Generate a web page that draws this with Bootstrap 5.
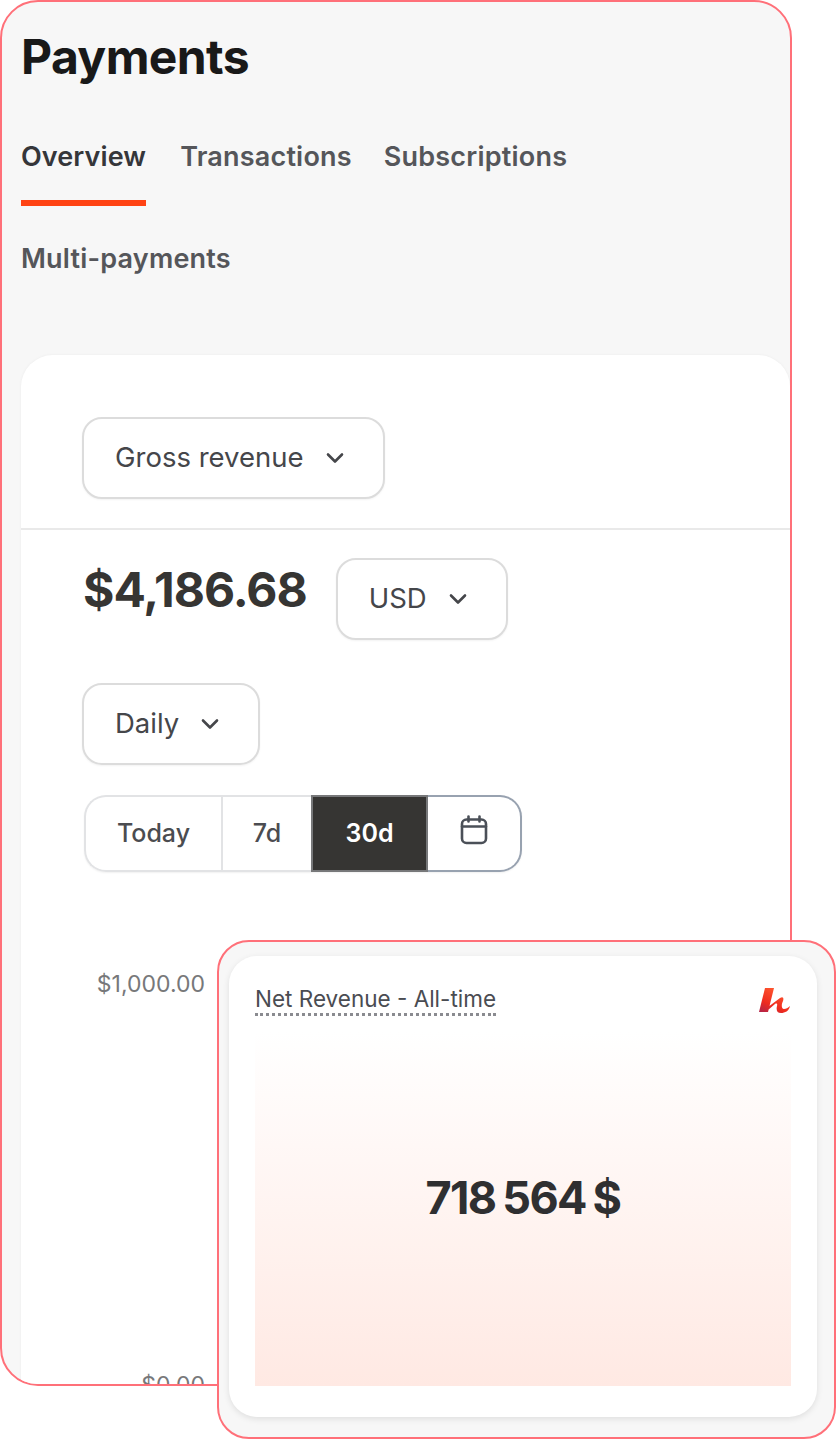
<!DOCTYPE html>
<html lang="en">
<head>
<meta charset="utf-8">
<title>Payments</title>
<link rel="stylesheet" href="https://cdn.jsdelivr.net/npm/bootstrap@5.3.0/dist/css/bootstrap.min.css">
<style>
html,body{margin:0;background:#fff;font-family:Inter,"Liberation Sans",sans-serif}
.stage{position:relative;width:836px;height:1440px;overflow:hidden}
.frame{width:792px;height:1386px;border:2px solid #ff7079;border-radius:38px;background:#f7f7f7;overflow:hidden;padding:0 0 0 19px}
.page-title{font-size:48px;font-weight:700;letter-spacing:-.6px;color:#191919;line-height:54px;margin:28px 0 0 0}
.tabbar{display:flex;flex-wrap:wrap;gap:0 32px;width:700px;margin-top:57px}
.tabitem{font-size:27px;font-weight:600;line-height:32px;color:#55565a;padding:0 0 27px;border-bottom:6px solid transparent;margin:0;text-decoration:none;letter-spacing:.2px}
.tabitem.on{color:#35363a;border-bottom-color:#ff4314;letter-spacing:.1px;margin-right:2px}
.tab-wide{flex-basis:100%;margin-top:37px;padding-bottom:0;border:0}
.panel-main{margin-top:80px;background:#fff;border-radius:32px 32px 0 0;height:1100px;overflow:hidden;box-shadow:0 0 3px rgba(0,0,0,.05)}
.panel-head{padding:62px 0 29px 61px;border-bottom:2px solid #e9e9e9}
.picker{display:inline-flex;align-items:center;height:82px;background:#fff;border:2px solid #dcdcdc;border-radius:20px;font-size:27.5px;font-weight:400;color:#45464a;padding:0 38px 0 31px;gap:21px;box-shadow:0 1px 2px rgba(0,0,0,.05)}
.picker svg{width:20px;height:12px;flex:none}
.amount-row{display:flex;gap:29px;padding:28px 0 0 62px;align-items:flex-start}
.amount{font-size:48px;font-weight:700;letter-spacing:-1px;color:#363533;line-height:64px;margin:0}
.pick-wrap{padding:43px 0 0 61px}
.seg{display:inline-flex;height:77px;margin:30px 0 0 63px;border-radius:22px;background:#fff;align-items:stretch;box-shadow:0 1px 2px rgba(0,0,0,.06)}
.seg-b{border:2px solid #e2e3e5;border-right:0;background:#fff;font-size:25px;font-weight:500;color:#4b4c50;display:flex;align-items:center;justify-content:center;padding:0}
.seg-t{width:137px;border-radius:22px 0 0 22px}
.seg-7{width:90px}
.seg-3{width:117px;background:#363533;color:#fff;border:2px solid #77787a;font-weight:600}
.seg-c{width:94px;border:2px solid #98a2b0;border-left:0;border-radius:0 22px 22px 0;padding-bottom:8px}
.axis{display:flex;flex-direction:column;justify-content:space-between;width:184px;height:429px;margin-top:98px;text-align:right;font-size:23px;color:#77787a;line-height:28px}
.overlay{position:absolute;left:217px;top:940px;width:619px;height:499px;background:#f7f7f7;border:2px solid #ff7079;border-radius:32px;padding:14px 17px 20px 10px}
.inner{height:100%;background:#fff;border-radius:28px;box-shadow:0 2px 6px rgba(0,0,0,.1);padding:30px 26px 31px 26px;display:flex;flex-direction:column}
.inner-top{display:flex;justify-content:space-between;align-items:flex-start}
.metric{font-size:22.5px;line-height:26px;color:#4a4c52;border-bottom:3px dotted #8a8b90;padding-bottom:1px;margin:0}
.glow{flex:1;margin-top:16px;background:linear-gradient(180deg,#fff 0%,#ffe9e3 100%);display:flex;align-items:center;justify-content:center}
.big{font-size:45px;font-weight:700;letter-spacing:-1.7px;word-spacing:-2px;color:#2f2f31;margin:0 0 22px}
</style>
</head>
<body>
<div class="stage">
  <div class="frame">
    <h1 class="page-title">Payments</h1>
    <nav class="tabbar">
      <a class="tabitem on" href="#">Overview</a>
      <a class="tabitem" href="#">Transactions</a>
      <a class="tabitem" href="#">Subscriptions</a>
      <a class="tabitem tab-wide" href="#">Multi-payments</a>
    </nav>
    <div class="panel-main">
      <div class="panel-head">
        <button class="picker" type="button">Gross revenue
          <svg viewBox="0 0 20 12" fill="none" stroke="#45464a" stroke-width="2.6" stroke-linecap="round" stroke-linejoin="round"><path d="M3 2.500l7 7 7-7"/></svg>
        </button>
      </div>
      <div class="amount-row">
        <p class="amount">$4,186.68</p>
        <button class="picker" type="button">USD
          <svg viewBox="0 0 20 12" fill="none" stroke="#45464a" stroke-width="2.6" stroke-linecap="round" stroke-linejoin="round"><path d="M3 2.500l7 7 7-7"/></svg>
        </button>
      </div>
      <div class="pick-wrap">
        <button class="picker" type="button">Daily
          <svg viewBox="0 0 20 12" fill="none" stroke="#45464a" stroke-width="2.6" stroke-linecap="round" stroke-linejoin="round"><path d="M3 2.500l7 7 7-7"/></svg>
        </button>
      </div>
      <div class="seg">
        <div class="seg-b seg-t">Today</div>
        <div class="seg-b seg-7">7d</div>
        <div class="seg-b seg-3">30d</div>
        <div class="seg-b seg-c">
          <svg width="28" height="30" viewBox="0 0 28 30" fill="none" stroke="#4b5058" stroke-width="2.6" stroke-linecap="round" stroke-linejoin="round"><rect x="2" y="4.500" width="24" height="23.500" rx="4.500"/><path d="M2 11.500h24M8.500 1.500v5M19.500 1.500v5"/></svg>
        </div>
      </div>
      <div class="axis"><span>$1,000.00</span><span>$0.00</span></div>
    </div>
  </div>
  <div class="overlay">
    <div class="inner">
      <div class="inner-top">
        <p class="metric">Net Revenue - All-time</p>
        <svg width="32" height="28" viewBox="0 0 32 28" class="mt-n1">
          <defs><linearGradient id="kg" x1="0" y1="1" x2=".6" y2="0"><stop offset="0" stop-color="#a8234f"/><stop offset=".4" stop-color="#ee2a1e"/><stop offset="1" stop-color="#ff5a30"/></linearGradient></defs>
          <path fill="url(#kg)" d="M6 2h9L9 26H0zM9 21l12-9c3-2 4 0 3 3-1.500 3-2 8 1 8 2 0 4-1 6-3-1 5-5 7-9 7s-5-3-4-7c.5-2 0-3-2-2l-7 6z"/>
        </svg>
      </div>
      <div class="glow"><p class="big">718 564 $</p></div>
    </div>
  </div>
</div>
<script src="https://cdn.jsdelivr.net/npm/bootstrap@5.3.0/dist/js/bootstrap.bundle.min.js"></script>
</body>
</html>
